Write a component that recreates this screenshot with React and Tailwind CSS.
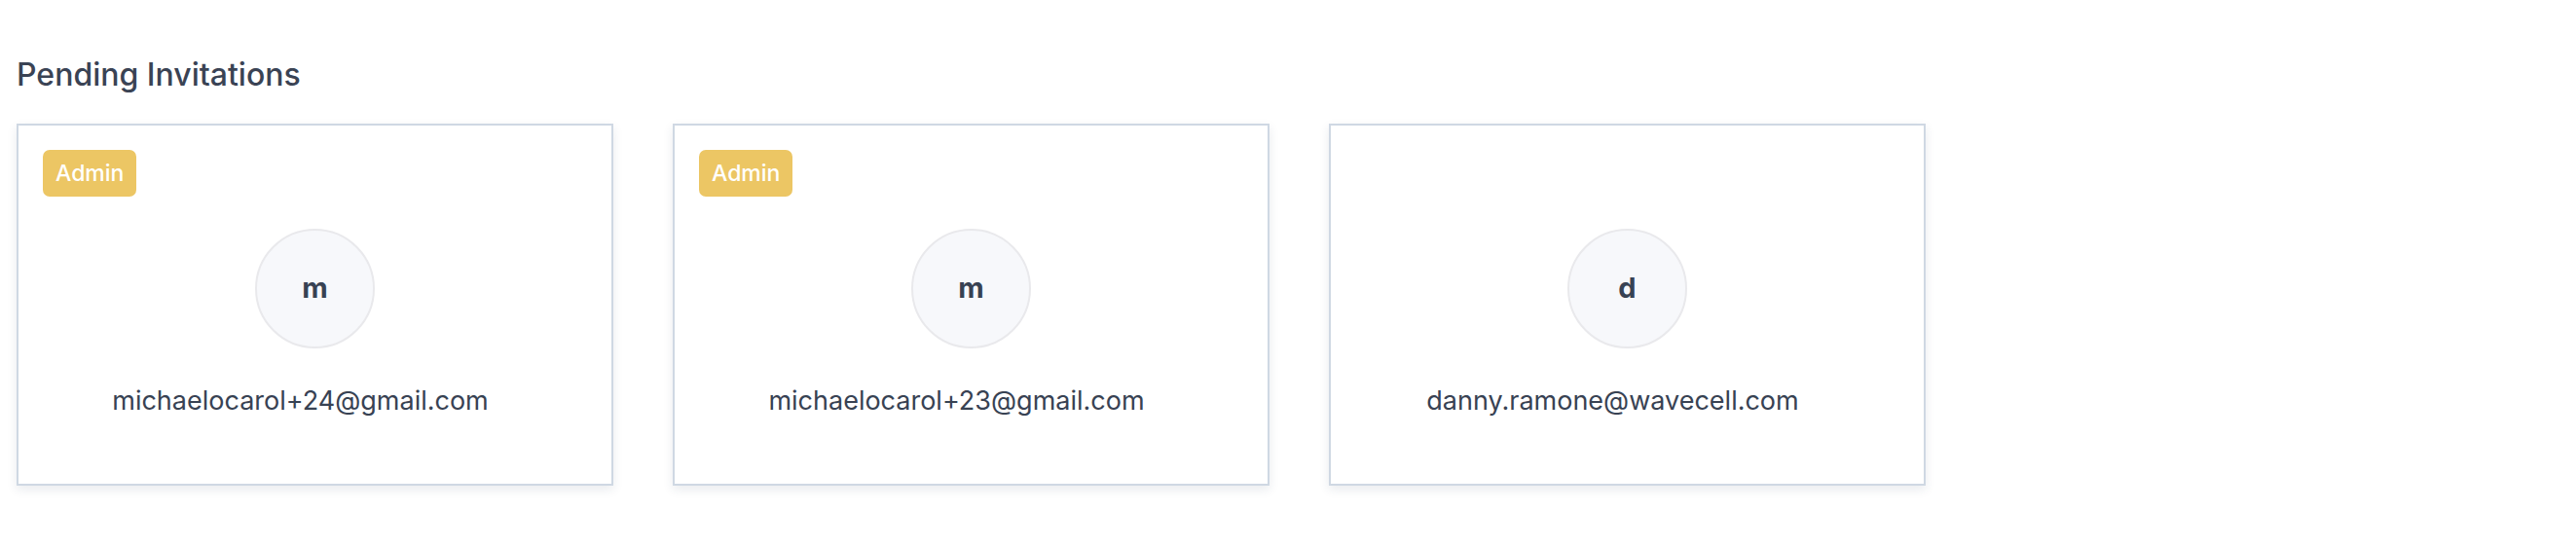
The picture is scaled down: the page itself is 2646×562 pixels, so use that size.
import React from "react";

const invites = [
  { email: "michaelocarol+24@gmail.com", initial: "m", admin: true },
  { email: "michaelocarol+23@gmail.com", initial: "m", admin: true },
  { email: "danny.ramone@wavecell.com", initial: "d", admin: false },
];

function Card({ email, initial, admin }) {
  return (
    <div className="w-[613px] h-[372px] border-2 border-[#cfd8e3] bg-white shadow-[0_4px_10px_rgba(40,60,90,0.10)] flex flex-col items-center px-[25px] pt-[25px]">
      <div className="w-full h-[48px] flex">
        {admin && (
          <span className="h-[48px] px-[13px] rounded-[7px] bg-[#ecc664] text-white text-[23px] font-medium flex items-center leading-none">
            Admin
          </span>
        )}
      </div>
      <div className="mt-[33px] w-[123px] h-[123px] rounded-full border-2 border-[#e9e9ec] bg-[#f7f8fb] flex items-center justify-center">
        <span className="text-[29px] font-bold text-[#384253] leading-none -mt-[2px]">{initial}</span>
      </div>
      <div className="mt-[37px] pr-[30px] text-[27px] leading-[34px] text-[#384253]">{email}</div>
    </div>
  );
}

export default function App() {
  return (
    <div className="w-[2646px] h-[562px] bg-white pl-[17px] pt-[58px]" style={{ fontFamily: "Inter, 'Open Sans', sans-serif" }}>
      <h2 className="text-[32px] leading-[38px] font-medium text-[#3a4354]">Pending Invitations</h2>
      <div className="mt-[31px] flex gap-[61px]">
        {invites.map((inv) => (
          <Card key={inv.email} {...inv} />
        ))}
      </div>
    </div>
  );
}
